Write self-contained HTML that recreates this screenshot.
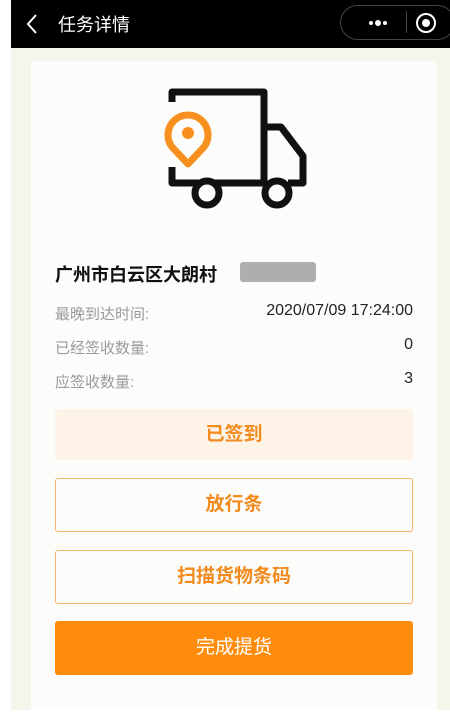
<!DOCTYPE html>
<html><head><meta charset="utf-8"><style>
*{margin:0;padding:0;box-sizing:border-box}
body{width:450px;height:720px;background:#fff;font-family:"Liberation Sans","Noto Sans CJK SC",sans-serif;position:relative;overflow:hidden}
#hdr{position:absolute;left:11px;top:0;width:439px;height:48px;background:#000;color:#fff}
#pg{position:absolute;left:11px;top:48px;width:439px;height:662px;background:#f4f6ec}
#card{position:absolute;left:31px;top:61px;width:406px;height:649px;background:#fcfdfa}
.t{position:absolute;font-size:15px;color:#9a9a9a}
.v{position:absolute;right:37px;font-size:16px;color:#222}
.b{position:absolute;left:55px;width:358px;border-radius:3px;text-align:center;font-size:19px;color:#f28a1e;font-weight:bold}
</style></head><body>
<div id="hdr">
<svg style="position:absolute;left:14px;top:13px" width="14" height="22"><path d="M11 2 L3 11 L11 20" stroke="#fff" stroke-width="2" fill="none"/></svg>
<div style="position:absolute;left:47px;top:11px;font-size:18px">任务详情</div>
<div style="position:absolute;left:329px;top:5px;width:115px;height:35px;border:1px solid #444;border-radius:18px"></div>
<div style="position:absolute;left:358px;top:21px;width:4px;height:4px;border-radius:50%;background:#fff"></div>
<div style="position:absolute;left:364px;top:20px;width:6px;height:6px;border-radius:50%;background:#fff"></div>
<div style="position:absolute;left:372px;top:21px;width:4px;height:4px;border-radius:50%;background:#fff"></div>
<div style="position:absolute;left:395px;top:11px;width:1px;height:22px;background:#444"></div>
<div style="position:absolute;left:405px;top:13px;width:20px;height:20px;border:2.5px solid #fff;border-radius:50%"></div>
<div style="position:absolute;left:411px;top:19px;width:8px;height:8px;background:#fff;border-radius:50%"></div>
</div>
<div id="pg"></div>
<div id="card"></div>
<svg style="position:absolute;left:0;top:0" width="450" height="230">
<path d="M172 102 V92 H264 V183 H172 V167" stroke="#111" stroke-width="7" fill="none" stroke-linejoin="round"/>
<path d="M264 127 H281 L303 156 V183 H288" stroke="#111" stroke-width="7" fill="none" stroke-linejoin="round"/>
<circle cx="207" cy="193" r="12" stroke="#111" stroke-width="7" fill="#fcfdfa"/>
<circle cx="277" cy="193" r="12" stroke="#111" stroke-width="7" fill="#fcfdfa"/>
<path d="M188 164 L172 147 A20 20 0 1 1 204 147 Z" stroke="#f7901e" stroke-width="7" fill="#fcfdfa" stroke-linejoin="round"/>
<circle cx="188" cy="133" r="6" fill="#f7901e"/>
</svg>
<div style="position:absolute;left:55px;top:261px;font-size:18px;font-weight:bold;color:#111">广州市白云区大朗村</div>
<div style="position:absolute;left:240px;top:262px;width:76px;height:20px;background:#9a9a9a;border-radius:3px;opacity:.8"></div>
<div class="t" style="left:55px;top:303px">最晚到达时间:</div><div class="v" style="top:302px">2020/07/09 17:24:00</div>
<div class="t" style="left:55px;top:337px">已经签收数量:</div><div class="v" style="top:336px">0</div>
<div class="t" style="left:55px;top:371px">应签收数量:</div><div class="v" style="top:370px">3</div>
<div class="b" style="top:409px;height:51px;line-height:51px;background:#fdf4e7">已签到</div>
<div class="b" style="top:478px;height:54px;line-height:52px;border:1.5px solid #f3b56c">放行条</div>
<div class="b" style="top:550px;height:54px;line-height:52px;border:1.5px solid #f3b56c">扫描货物条码</div>
<div class="b" style="top:621px;height:54px;line-height:54px;background:#ff8c0d;color:#fff;font-weight:normal">完成提货</div>
</body></html>
